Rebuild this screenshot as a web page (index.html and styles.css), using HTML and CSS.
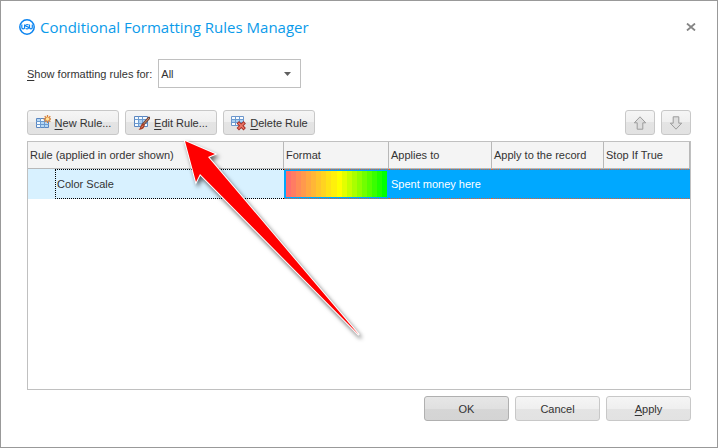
FILE: index.html
```html
<!DOCTYPE html>
<html lang="en">
<head>
<meta charset="utf-8">
<title>Conditional Formatting Rules Manager</title>
<link rel="stylesheet" href="styles.css">
</head>
<body>
<div class="dialog">

<header class="titlebar">
<svg class="logo" viewBox="0 0 16 16" width="16" height="16" fill="none" stroke="#0b84f0">
<circle cx="8" cy="8" r="7.2" stroke-width="1.500"/>
<path d="M2.800 5.500v3q0 1.400 1.400 1.400t1.400-1.400v-3M9.500 6Q9 5.500 8.100 5.500q-1.400 0-1.400 1.100t1.400 1.100 1.400 1.100-1.400 1.100q-1 0-1.500-.5M10.500 5.500v3q0 1.400 1.400 1.400t1.400-1.400v-3" stroke-width="1.200"/>
</svg>
<h1>Conditional Formatting Rules Manager</h1>
<button class="close" type="button" aria-label="Close">
<svg viewBox="0 0 10 8" width="10" height="8"><path d="M1 .5l8 7M9 .5L1 7.500" stroke="#858585" stroke-width="1.800"/></svg>
</button>
</header>

<div class="filter">
<label for="scope"><u>S</u>how formatting rules for:</label>
<div class="combo">
<select id="scope"><option>All</option></select>
<svg viewBox="0 0 7 4" width="7" height="4"><path d="M0 0h7L3.500 4z" fill="#606060"/></svg>
</div>
</div>

<div class="toolbar">
<button class="btn tool" type="button">
<svg viewBox="0 0 16 16" width="16" height="16">
<path d="M1.500 3.500h12v9h-12z" fill="#f4faff" stroke="#5b86c0"/>
<path d="M2 4h3v2H2zM6 7h3v2H6zM10 7h3v2h-3zM6 10h3v2H6zM10 10h3v2h-3z" fill="#b5d8f5"/>
<path d="M1 6.500h13M1 9.500h13M5.500 3v10M9.500 3v10" stroke="#6d9bd0"/>
<path d="M12.500 0v8M8.500 4h8M9.700 1.200l5.600 5.600M15.300 1.200L9.700 6.800" stroke="#d9823a" stroke-width="1.300"/>
<circle cx="12.500" cy="4" r="1.700" fill="#ffe39a"/>
</svg>
<span><u>N</u>ew Rule...</span>
</button>
<button class="btn tool" type="button">
<svg viewBox="0 0 16 16" width="16" height="16">
<path d="M.5 1.500h13v10H.5z" fill="#f4faff" stroke="#5b86c0"/>
<path d="M5 5h3v3H5zM9 5h4v3H9zM5 9h3v2H5z" fill="#a9cff2"/>
<path d="M.5 4.500h13M.5 8.500h13M4.500 1.500v10M8.500 1.500v10" stroke="#6d9bd0"/>
<path d="M15 3L9 9.500" stroke="#70483c" stroke-width="2.600" stroke-linecap="round"/>
<path d="M15 3L9.500 9" stroke="#d68b68" stroke-width="1"/>
<path d="M9.500 8.500q2 1 .7 3.500-1.500 3-5.700 2.700 1.800-1.200 1.900-3.200.5-2.600 3.100-3z" fill="#a83b24"/>
<path d="M7.500 12.500l1.500-2" stroke="#e19a72"/>
</svg>
<span><u>E</u>dit Rule...</span>
</button>
<button class="btn tool" type="button">
<svg viewBox="0 0 16 16" width="16" height="16">
<path d="M1.500 1.500h12v9h-12z" fill="#f8fcff" stroke="#6d96cb"/>
<path d="M2 5h11v2H2z" fill="#a9cff2"/>
<path d="M1 4.500h13M1 7.500h13M5.500 1.500v9M9.500 1.500v9" stroke="#6d9bd0"/>
<path d="M9 8.500l4.500 4.500M13.500 8.500L9 13" stroke="#a62f27" stroke-width="3.400" stroke-linecap="square"/>
<path d="M9 8.500l4.500 4.500M13.500 8.500L9 13" stroke="#ec7666" stroke-width="1.600" stroke-linecap="square"/>
</svg>
<span><u>D</u>elete Rule</span>
</button>
<div class="movers">
<button class="btn" type="button" aria-label="Move up">
<svg viewBox="0 0 14 14" width="14" height="14"><path d="M7 .8l5.700 6H9.800v6.400H4.200V6.800H1.300z" fill="#dedede" stroke="#9c9c9c"/></svg>
</button>
<button class="btn" type="button" aria-label="Move down">
<svg viewBox="0 0 14 14" width="14" height="14"><path d="M7 13.200l5.700-6H9.800V.8H4.200v6.400H1.300z" fill="#dedede" stroke="#9c9c9c"/></svg>
</button>
</div>
</div>

<div class="grid">
<table>
<colgroup><col class="c-indent"><col class="c-rule"><col class="c-format"><col class="c-applies"><col class="c-record"><col class="c-stop"></colgroup>
<thead>
<tr><th colspan="2">Rule (applied in order shown)</th><th>Format</th><th>Applies to</th><th>Apply to the record</th><th>Stop If True</th></tr>
</thead>
<tbody>
<tr>
<td class="indent"></td>
<td class="name">Color Scale</td>
<td>
<svg class="swatch" viewBox="0 0 20 1" preserveAspectRatio="none" shape-rendering="crispEdges">
<path fill="#ff6e6e" d="M0 0h20v1H0z"/>
<path fill="#ff7c63" d="M1 0h19v1H1z"/>
<path fill="#ff8b58" d="M2 0h18v1H2z"/>
<path fill="#ff994d" d="M3 0h17v1H3z"/>
<path fill="#ffa842" d="M4 0h16v1H4z"/>
<path fill="#ffb637" d="M5 0h15v1H5z"/>
<path fill="#ffc52c" d="M6 0h14v1H6z"/>
<path fill="#ffd321" d="M7 0h13v1H7z"/>
<path fill="#ffe216" d="M8 0h12v1H8z"/>
<path fill="#fff00b" d="M9 0h11v1H9z"/>
<path fill="#ffff00" d="M10 0h10v1H10z"/>
<path fill="#e3ff00" d="M11 0h9v1h-9z"/>
<path fill="#c6ff00" d="M12 0h8v1h-8z"/>
<path fill="#aaff00" d="M13 0h7v1h-7z"/>
<path fill="#8eff00" d="M14 0h6v1h-6z"/>
<path fill="#71ff00" d="M15 0h5v1h-5z"/>
<path fill="#55ff00" d="M16 0h4v1h-4z"/>
<path fill="#39ff00" d="M17 0h3v1h-3z"/>
<path fill="#1cff00" d="M18 0h2v1h-2z"/>
<path fill="#00ff00" d="M19 0h1v1h-1z"/>
</svg>
</td>
<td>Spent money here</td>
<td></td>
<td></td>
</tr>
</tbody>
</table>
</div>

<footer class="actions">
<button class="btn default" type="button">OK</button>
<button class="btn" type="button">Cancel</button>
<button class="btn" type="button"><u>A</u>pply</button>
</footer>

<!-- pointer to the Edit Rule button -->
<svg class="pointer" viewBox="0 0 190 210" width="190" height="210">
<path d="M5 6l30 13-7 3 151 178L20 39l-4 8z"/>
</svg>

</div>
</body>
</html>
```

FILE: styles.css
```css
/* Rules manager dialog */

*
{ box-sizing: border-box;
}

body
{ margin: 0;
background: #fff;
color: #333;
font: 11px/16px "Liberation Sans", Arial, sans-serif;
}

button, select
{ font: inherit;
color: inherit;
}

u
{ text-underline-offset: 2px;
}

.dialog
{ position: relative;
display: flex;
flex-direction: column;
min-height: 100vh;
padding: 14px 26px 26px;
border: 1px solid #999;
}

/* Title */

.titlebar
{ display: flex;
align-items: center;
gap: 5px;
height: 24px;
margin-left: -8px;
margin-right: -9px;
}

.titlebar h1
{ flex: 1;
margin: 0;
color: #0b9bea;
font: 15px/24px "Open Sans", "Noto Sans", sans-serif;
}

.close
{ display: flex;
padding: 4px;
border: 0;
background: none;
}

/* Filter */

.filter
{ display: flex;
align-items: center;
gap: 6px;
margin-top: 20px;
}

.combo
{ position: relative;
width: 143px;
}

.combo select
{ display: block;
appearance: none;
width: 100%;
height: 29px;
padding: 0 2px;
border: 1px solid #c0c0c0;
border-radius: 0;
background: #fff;
}

.combo svg
{ position: absolute;
right: 10px;
top: 13px;
pointer-events: none;
}

/* Buttons */

.btn
{ display: flex;
align-items: center;
justify-content: center;
height: 25px;
padding: 0;
border: 1px solid #c8c8c8;
border-radius: 3px;
background: linear-gradient(#f5f5f5, #efefef 50%, #e4e4e4 50%, #e2e2e2);
}

.btn.default
{ border-color: #b0b0b0;
background: linear-gradient(#e6e6e6, #e0e0e0 50%, #d6d6d6 50%, #d4d4d4);
}

.toolbar
{ display: flex;
gap: 6px;
margin-top: 22px;
}

.tool
{ width: 92px;
gap: 4px;
white-space: nowrap;
}

.movers
{ display: flex;
gap: 6px;
margin-left: auto;
}

.movers .btn
{ width: 30px;
}

/* Rule list */

.grid
{ flex: 1;
margin-top: 6px;
border: 1px solid #c0c0c0;
}

table
{ width: 100%;
border-collapse: separate;
border-spacing: 0;
table-layout: fixed;
}

.c-indent { width: 27px; }
.c-format { width: 105px; }
.c-applies { width: 103px; }
.c-record { width: 112px; }
.c-stop { width: 86px; }

th
{ height: 27px;
padding: 0 2px;
border-right: 1px solid #b8b8b8;
border-bottom: 1px solid #b8b8b8;
background: #f4f4f4;
font-weight: normal;
text-align: left;
white-space: nowrap;
}

/* selected row, with a one-pixel dotted focus line above and below */
td
{ height: 30px;
padding: 0 2px;
background:
 linear-gradient(90deg, #e06030 50%, #00a8ff 50%) left top / 2px 1px repeat-x,
 linear-gradient(90deg, #e06030 50%, #00a8ff 50%) left bottom / 2px 1px repeat-x,
 #00a8ff;
color: #fff;
white-space: nowrap;
}

td.indent
{ background: #d8f1ff;
}

td.name
{ padding: 0 1px;
border: 1px dotted #000;
border-right: 0;
background: #d8f1ff;
color: #333;
}

.swatch
{ display: block;
width: 100%;
height: 26px;
}

/* Bottom buttons */

.actions
{ display: flex;
justify-content: flex-end;
gap: 6px;
margin-top: 6px;
}

.actions .btn
{ width: 85px;
}

.pointer
{ position: absolute;
left: 179px;
top: 134px;
filter: drop-shadow(2px 3px 2px rgba(0, 0, 0, 0.6));
pointer-events: none;
}

.pointer path
{ fill: #f00;
stroke: #fff;
stroke-width: 2px;
paint-order: stroke;
}
```
